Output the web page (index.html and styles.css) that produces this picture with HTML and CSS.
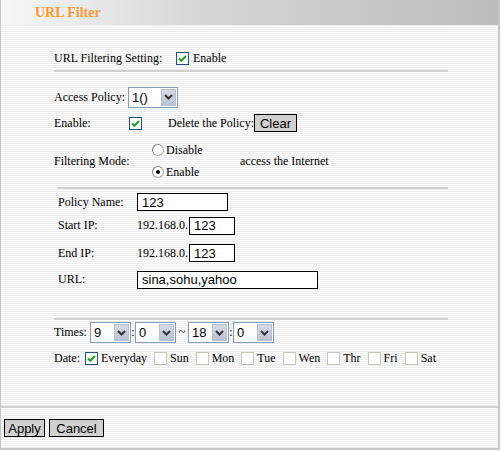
FILE: index.html
```html
<!DOCTYPE html>
<html>
<head>
<meta charset="utf-8">
<link rel="stylesheet" href="styles.css">
</head>
<body>
<div class="page">
  <div class="title-bar"><span class="title">URL Filter</span></div>
  <div class="main">
    <div class="content">
      <div class="row r-setting">
        <span class="lbl w-setting">URL Filtering Setting:</span>
        <span class="cb checked"><svg viewBox="0 0 11 11" width="11" height="11"><path d="M2 5.5 L4.3 7.8 L9 3" fill="none" stroke="#21a121" stroke-width="2"/></svg></span>
        <span class="lbl after-cb">Enable</span>
      </div>
      <div class="hline"></div>
      <div class="row r-policy">
        <span class="lbl w-policy-lbl">Access Policy:</span>
        <span class="sel w-policy"><span class="sel-val">1()</span><span class="sel-btn"><svg viewBox="0 0 9 6" width="9" height="6"><path d="M1 1 L4.5 4.5 L8 1" fill="none" stroke="#333" stroke-width="2"/></svg></span></span>
      </div>
      <div class="row r-enable">
        <span class="lbl w-enable">Enable:</span>
        <span class="cb checked"><svg viewBox="0 0 11 11" width="11" height="11"><path d="M2 5.5 L4.3 7.8 L9 3" fill="none" stroke="#21a121" stroke-width="2"/></svg></span>
        <span class="lbl del">Delete the Policy:</span>
        <span class="btn clear">Clear</span>
      </div>
      <div class="row r-mode">
        <span class="lbl w-mode">Filtering Mode:</span>
        <div class="radios">
          <div class="radio-line"><span class="radio"></span><span class="lbl">Disable</span></div>
          <div class="radio-line"><span class="radio on"><span class="dot"></span></span><span class="lbl">Enable</span></div>
        </div>
        <span class="lbl access">access the Internet</span>
      </div>
      <div class="hline hline2"></div>
      <div class="fields">
        <div class="row r-name">
          <span class="lbl w-field">Policy Name:</span>
          <span class="inp w-name">123</span>
        </div>
        <div class="row r-start">
          <span class="lbl w-field">Start IP:</span>
          <span class="lbl">192.168.0.</span>
          <span class="inp w-ip">123</span>
        </div>
        <div class="row r-end">
          <span class="lbl w-field">End IP:</span>
          <span class="lbl">192.168.0.</span>
          <span class="inp w-ip">123</span>
        </div>
        <div class="row r-url">
          <span class="lbl w-field">URL:</span>
          <span class="inp w-url">sina,sohu,yahoo</span>
        </div>
      </div>
      <div class="hline hline3"></div>
      <div class="row r-times">
        <span class="lbl w-times">Times:</span>
        <span class="sel w-time"><span class="sel-val">9</span><span class="sel-btn"><svg viewBox="0 0 9 6" width="9" height="6"><path d="M1 1 L4.5 4.5 L8 1" fill="none" stroke="#333" stroke-width="2"/></svg></span></span>
        <span class="lbl sep">:</span>
        <span class="sel w-time"><span class="sel-val">0</span><span class="sel-btn"><svg viewBox="0 0 9 6" width="9" height="6"><path d="M1 1 L4.5 4.5 L8 1" fill="none" stroke="#333" stroke-width="2"/></svg></span></span>
        <span class="lbl tilde">~</span>
        <span class="sel w-time"><span class="sel-val">18</span><span class="sel-btn"><svg viewBox="0 0 9 6" width="9" height="6"><path d="M1 1 L4.5 4.5 L8 1" fill="none" stroke="#333" stroke-width="2"/></svg></span></span>
        <span class="lbl sep">:</span>
        <span class="sel w-time"><span class="sel-val">0</span><span class="sel-btn"><svg viewBox="0 0 9 6" width="9" height="6"><path d="M1 1 L4.5 4.5 L8 1" fill="none" stroke="#333" stroke-width="2"/></svg></span></span>
      </div>
      <div class="row r-date">
        <span class="lbl w-date">Date:</span>
        <span class="cb checked"><svg viewBox="0 0 11 11" width="11" height="11"><path d="M2 5.5 L4.3 7.8 L9 3" fill="none" stroke="#21a121" stroke-width="2"/></svg></span>
        <span class="lbl day">Everyday</span>
        <span class="cb"></span><span class="lbl day">Sun</span>
        <span class="cb"></span><span class="lbl day">Mon</span>
        <span class="cb"></span><span class="lbl day">Tue</span>
        <span class="cb"></span><span class="lbl day">Wen</span>
        <span class="cb"></span><span class="lbl day">Thr</span>
        <span class="cb"></span><span class="lbl day">Fri</span>
        <span class="cb"></span><span class="lbl day">Sat</span>
      </div>
    </div>
  </div>
  <div class="footer">
    <span class="btn apply">Apply</span>
    <span class="btn cancel">Cancel</span>
  </div>
</div>
</body>
</html>
```

FILE: styles.css
```css
html, body {
  margin: 0;
  padding: 0;
  background: #fff;
}
.page {
  width: 500px;
  height: 450px;
  box-sizing: border-box;
  border-left: 1px solid #c8c8c8;
  border-right: 2px solid #c8c8c8;
  border-bottom: 2px solid #c8c8c8;
  display: flex;
  flex-direction: column;
  font-family: "Liberation Serif", "Times New Roman", serif;
  font-size: 12px;
  color: #000;
  background: repeating-linear-gradient(to bottom, #fff 0, #fff 1px, #ececec 1px, #ececec 2px);
}
.title-bar {
  height: 25px;
  flex: none;
  background: linear-gradient(to right, #f7f7f7 0%, #d6d6d6 40%, #bcbcbc 100%);
  display: flex;
  align-items: center;
  padding-left: 34px;
}
.title {
  font-weight: bold;
  font-size: 14px;
  color: #fb9a35;
}
.main {
  height: 381px;
  flex: none;
  border-bottom: 2px solid #d0d0d0;
}
.content {
  padding-left: 53px;
  width: 394px;
}
.row {
  display: flex;
  align-items: center;
}
.lbl {
  white-space: nowrap;
}
.r-setting { margin-top: 24px; height: 18px; }
.w-setting { width: 122px; }
.after-cb { margin-left: 4px; }
.hline {
  height: 2px;
  background: #d0d0d0;
  margin-top: 3px;
}
.r-policy { margin-top: 14px; height: 22px; }
.w-policy-lbl { width: 74px; }
.r-enable { margin-top: 5px; height: 20px; }
.w-enable { width: 75px; }
.del { margin-left: 26px; }
.r-mode { margin-top: 6px; height: 44px; }
.w-mode { width: 97px; }
.radios { display: flex; flex-direction: column; width: 89px; }
.radio-line { height: 22px; display: flex; align-items: center; }
.radio-line .lbl { margin-left: 2px; }
.radio {
  width: 12px;
  height: 12px;
  border-radius: 50%;
  box-sizing: border-box;
  border: 1px solid #a8a8a8;
  border-top-color: #808080;
  border-left-color: #808080;
  background: #fff;
  display: flex;
  align-items: center;
  justify-content: center;
  margin-left: 1px;
}
.radio .dot {
  width: 4px;
  height: 4px;
  border-radius: 50%;
  background: #000;
}
.hline2 { margin-top: 4px; margin-left: 3px; }
.fields { padding-left: 4px; }
.w-field { width: 79px; }
.r-name { margin-top: 3px; height: 20px; }
.r-start { margin-top: 3px; height: 21px; }
.r-end { margin-top: 7px; height: 20px; }
.r-url { margin-top: 6px; height: 21px; }
.inp {
  box-sizing: border-box;
  height: 18px;
  border: 1px solid #000;
  background: #fff;
  font-family: "Liberation Sans", Arial, sans-serif;
  font-size: 13px;
  padding-left: 4px;
  display: flex;
  align-items: center;
}
.w-name { width: 91px; }
.w-ip { width: 46px; margin-left: 1px; }
.w-url { width: 181px; }
.hline3 { margin-top: 28px; }
.r-times { margin-top: 2px; height: 21px; }
.w-times { width: 36px; }
.sel {
  box-sizing: border-box;
  height: 21px;
  border: 1px solid #7f9db9;
  background: #fff;
  display: flex;
  align-items: stretch;
  font-family: "Liberation Sans", Arial, sans-serif;
  font-size: 13px;
}
.sel-val {
  flex: 1;
  display: flex;
  align-items: center;
  padding-left: 3px;
}
.sel-btn {
  width: 15px;
  margin: 1px;
  background: linear-gradient(to bottom, #d6dbe6, #b9c1d3);
  border: 1px solid #b5bdd0;
  box-sizing: border-box;
  display: flex;
  align-items: center;
  justify-content: center;
}
.w-policy { width: 50px; }
.w-time { width: 41px; }
.sep { width: 4px; text-align: center; }
.tilde { width: 12px; text-align: center; }
.r-date { margin-top: 5px; height: 20px; }
.w-date { width: 31px; }
.cb {
  width: 13px;
  height: 13px;
  box-sizing: border-box;
  border: 1px solid #c7c6b8;
  background: #fff;
  display: flex;
  align-items: center;
  justify-content: center;
  flex: none;
}
.cb.checked { border-color: #1c5180; }
.day { margin-left: 3px; margin-right: 7px; }
.btn {
  box-sizing: border-box;
  height: 18px;
  border: 1px solid #000;
  background: #d0d0d0;
  font-family: "Liberation Sans", Arial, sans-serif;
  font-size: 13px;
  display: inline-flex;
  align-items: center;
  justify-content: center;
}
.clear { width: 43px; }
.footer {
  flex: 1;
  display: flex;
  align-items: flex-start;
  padding-top: 11px;
  padding-left: 3px;
  gap: 4px;
}
.apply { width: 41px; }
.cancel { width: 55px; }
```
